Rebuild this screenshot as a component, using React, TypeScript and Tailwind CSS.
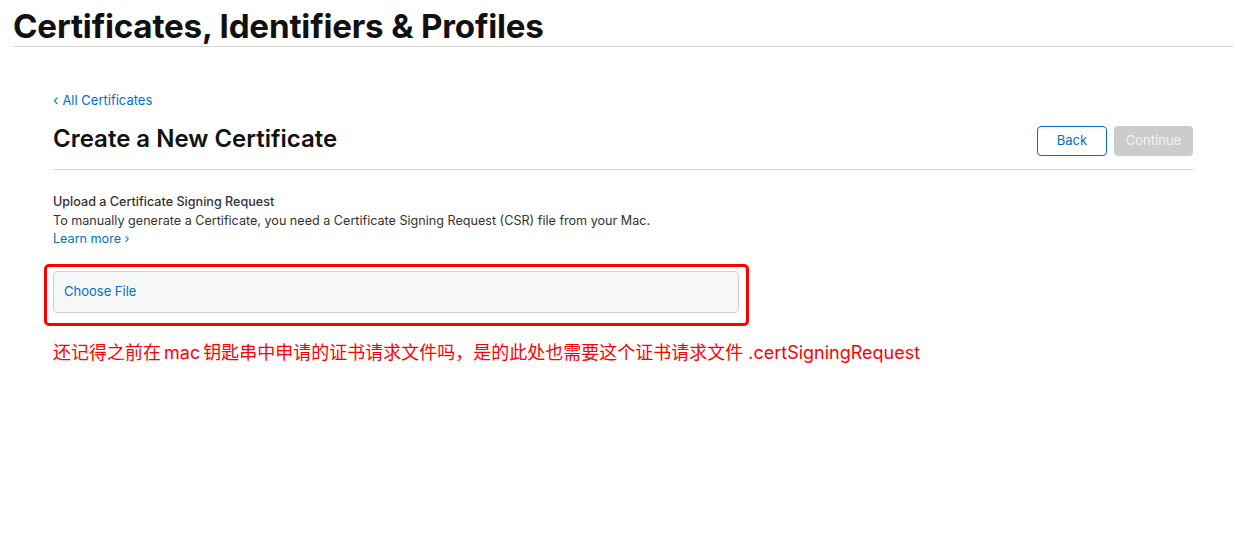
import React from 'react';

export default function App() {
  return (
    <div className="w-[1235px] h-[550px] bg-white font-['Inter','Liberation_Sans',sans-serif] text-[#1d1d1f]">
      <header className="ml-[13px] mr-[2px] border-b border-[#d6d6d6] pt-[6px] pb-0">
        <h1 className="text-[33.2px] leading-[40px] font-bold tracking-[-0.2px] text-[#111]">
          Certificates, Identifiers &amp; Profiles
        </h1>
      </header>

      <main className="mx-[53px] w-[1140px] pt-[44px]">
        <a className="flex items-center gap-[4px] text-[13px] leading-[18px] text-[#0070c9]">
          <span className="text-[14px]">‹</span>
          <span>All Certificates</span>
        </a>

        <div className="flex items-end justify-between border-b border-[#d6d6d6] pb-[13px] mt-[13px]">
          <h2 className="text-[24px] leading-[34px] font-semibold text-[#111]">Create a New Certificate</h2>
          <div className="flex gap-[7px]">
            <button className="w-[70px] h-[30px] rounded-[4px] border border-[#0070c9] text-[13px] text-[#0070c9] bg-white">
              Back
            </button>
            <button className="w-[79px] h-[30px] rounded-[4px] bg-[#cccccc] text-[13px] text-[#f2f2f2]">
              Continue
            </button>
          </div>
        </div>

        <section className="mt-[23px] text-[12.6px] leading-[18.5px] text-[#333]">
          <p className="font-medium">Upload a Certificate Signing Request</p>
          <p>To manually generate a Certificate, you need a Certificate Signing Request (CSR) file from your Mac.</p>
          <a className="text-[#0070c9]">Learn more ›</a>
        </section>

        <div className="-ml-[9px] mt-[15px] w-[705px] rounded-[5px] border-[3px] border-[#ff0000] pt-[4px] pl-[6px] pr-[7px] pb-[10px]">
          <div className="flex h-[42px] items-center rounded-[4px] border border-[#cfcfcf] bg-[#f6f7f7] px-[10px]">
            <span className="text-[13px] text-[#0070c9]">Choose File</span>
          </div>
        </div>

        <p className="mt-[14px] text-[18px] leading-[26px] text-[#ff0000] font-['Inter','Noto_Sans_CJK_SC',sans-serif]">
          还记得之前在<span className="mx-[3px]">mac</span>钥匙串中申请的证书请求文件吗，是的此处也需要这个证书请求文件 .certSigningRequest
        </p>
      </main>
    </div>
  );
}
